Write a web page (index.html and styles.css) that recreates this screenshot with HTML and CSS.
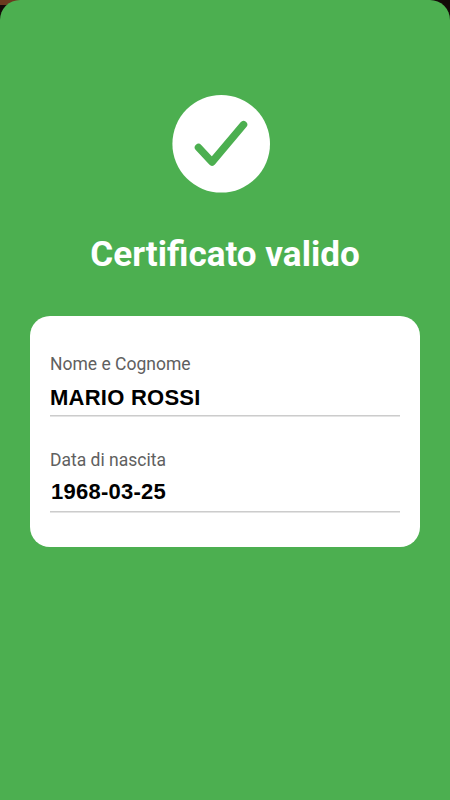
FILE: index.html
```html
<!DOCTYPE html>
<html lang="it">
<head>
    <meta charset="UTF-8">
    <meta name="viewport" content="width=device-width, initial-scale=1.0">
    <title>Certificato valido</title>
    <link rel="stylesheet" href="styles.css">
</head>
<body>
    <main class="sheet">
        <svg class="status-icon" viewBox="0 0 98 98" aria-hidden="true">
            <circle cx="49.2" cy="48.8" r="48.8" fill="#fff"/>
            <path d="M26.500 52.500 L40 67 L71.500 29.700" fill="none" stroke="#4caf50" stroke-width="7.500" stroke-linecap="round" stroke-linejoin="round"/>
        </svg>
        <h1 class="title">Certificato valido</h1>
        <section class="card">
            <div class="field">
                <div class="label">Nome e Cognome</div>
                <div class="value">MARIO ROSSI</div>
            </div>
            <div class="field">
                <div class="label">Data di nascita</div>
                <div class="value value-date">1968-03-25</div>
            </div>
        </section>
    </main>
</body>
</html>
```
FILE: styles.css
```css
* {
    margin: 0;
    padding: 0;
    box-sizing: border-box;
}

body {
    background: linear-gradient(#6b3a1e 5px, transparent 5px) 0 0 / 20px 20px no-repeat #140a08;
    font-family: Roboto, sans-serif;
}

.sheet {
    display: flex;
    flex-direction: column;
    align-items: center;
    height: 800px;
    padding: 95px 30px 0;
    background: #4caf50;
    border-radius: 20px 20px 0 0;
}

.status-icon {
    width: 98px;
    height: 98px;
    margin-right: 8px;
}

.title {
    margin-top: 40px;
    font-size: 35.1px;
    line-height: 42px;
    font-weight: 700;
    color: #fff;
    white-space: nowrap;
}

.card {
    width: 100%;
    height: 231px;
    margin-top: 41px;
    padding: 36px 20px 0;
    background: #fff;
    border-radius: 20px;
}

.field {
    height: 64px;
    margin-bottom: 32px;
    border-bottom: 1px solid #ccc;
    box-shadow: 0 1px 0 #e4e4e4;
}

.label {
    font-size: 17.5px;
    line-height: 24px;
    color: #606060;
}

.value {
    margin-top: 9px;
    font-family: "Liberation Sans", Arial, sans-serif;
    font-size: 22px;
    line-height: 26px;
    letter-spacing: 0.25px;
    font-weight: 700;
    color: #000;
}

.value-date {
    margin-top: 7px;
    padding-left: 1px;
    letter-spacing: 0.25px;
}
```
